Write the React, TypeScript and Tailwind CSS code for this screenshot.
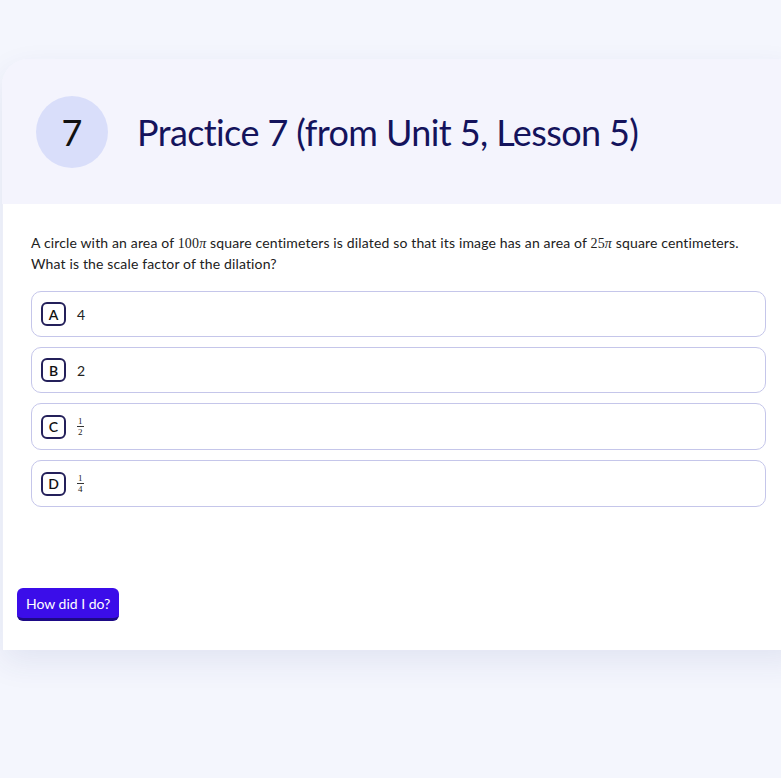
import React from "react";

const sans = "font-['Lato','Noto_Sans',sans-serif]";
const serif = "font-['Liberation_Serif','DejaVu_Serif',serif]";

function Frac({ num, den }: { num: string; den: string }) {
  return (
    <span className={`inline-flex flex-col items-center text-[9px] leading-[10px] text-[#222] ${serif}`}>
      <span className="px-[1px] border-b border-[#333]">{num}</span>
      <span>{den}</span>
    </span>
  );
}

function Pi({ n }: { n: string }) {
  return (
    <span className={serif}>
      {n}
      <i>π</i>
    </span>
  );
}

const options: { letter: string; tall: boolean; content: React.ReactNode }[] = [
  { letter: "A", tall: false, content: <span className="text-[14px]">4</span> },
  { letter: "B", tall: false, content: <span className="text-[14px]">2</span> },
  { letter: "C", tall: true, content: <Frac num="1" den="2" /> },
  { letter: "D", tall: true, content: <Frac num="1" den="4" /> },
];

export default function App() {
  return (
    <div className={`w-full min-h-[778px] overflow-hidden bg-[#f4f6fd] pt-[59px] ${sans}`}>
      <div className="ml-[2px] w-[800px] rounded-t-[26px] overflow-hidden shadow-[0_12px_32px_rgba(40,50,130,0.09)]">
        {/* Header */}
        <div className="h-[145px] bg-[#f4f4fd] flex items-center pl-[34px] gap-[29px]">
          <div className="w-[72px] h-[72px] rounded-full bg-[#d9defa] flex items-center justify-center text-[36px] text-[#111] leading-none">
            7
          </div>
          <h1 className="text-[36px] tracking-[-0.6px] text-[#14135c] leading-none">
            Practice 7 (from Unit 5, Lesson 5)
          </h1>
        </div>

        {/* Body */}
        <div className="bg-white pt-[29px] pb-[29px] border-l border-[#eceef8]">
          <div className="pl-[28px] w-[763px]">
            <p className="text-[14px] leading-[20px] tracking-[0.15px] text-[#212121]">
              A circle with an area of <Pi n="100" /> square centimeters is dilated so that its image has an area of{" "}
              <Pi n="25" /> square centimeters.
              <br />
              What is the scale factor of the dilation?
            </p>

            <div className="mt-[17px] flex flex-col gap-[10px]">
              {options.map((o) => (
                <div
                  key={o.letter}
                  className={`${o.tall ? "h-[47px]" : "h-[46px]"} rounded-[10px] border border-[#c5c6ea] flex items-center pl-[9px] gap-[11px] text-[#222]`}
                >
                  <span className="w-[25px] h-[24px] rounded-md border-2 border-[#24205a] flex items-center justify-center text-[14px] font-semibold text-[#111]">
                    {o.letter}
                  </span>
                  {o.content}
                </div>
              ))}
            </div>
          </div>

          <div className="mt-[81px] pl-[14px]">
            <button className="h-[33px] px-[9px] rounded-md bg-[#3b0de9] border-b-[3px] border-[#1d0a86] text-white text-[14px]">
              How did I do?
            </button>
          </div>
        </div>
      </div>
    </div>
  );
}
